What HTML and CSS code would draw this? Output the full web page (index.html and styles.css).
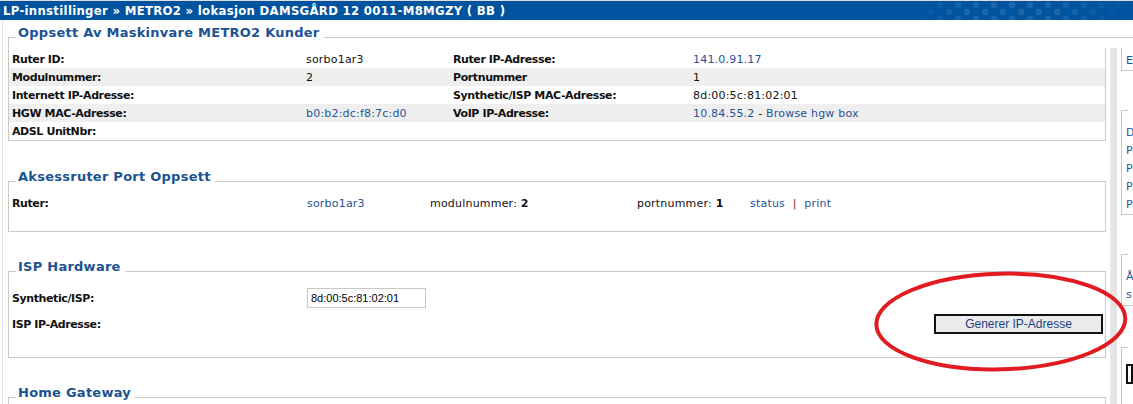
FILE: index.html
```html
<!DOCTYPE html>
<html lang="no">
<head>
<meta charset="utf-8">
<title>LP-innstillinger</title>
<link rel="stylesheet" href="styles.css">
</head>
<body>
<header class="topbar">
  <h1 class="crumbs">LP-innstillinger » METRO2 » lokasjon DAMSGÅRD 12 0011-M8MGZY ( BB )</h1>
  <div class="topbar-deco"></div>
</header>
<div class="layout">
  <main class="content">
    <section class="panel">
      <div class="panel-head"><span class="seg-start"></span><h2 class="legend">Oppsett Av Maskinvare METRO2 Kunder</h2><span class="seg-end"></span></div>
      <div class="panel-body hw-body">
        <div class="hw-table">
          <div class="row hw-row"><span class="lbl">Ruter ID:</span><span>sorbo1ar3</span><span class="lbl">Ruter IP-Adresse:</span><span><a href="#">141.0.91.17</a></span></div>
          <div class="row hw-row alt"><span class="lbl">Modulnummer:</span><span>2</span><span class="lbl">Portnummer</span><span>1</span></div>
          <div class="row hw-row"><span class="lbl">Internett IP-Adresse:</span><span></span><span class="lbl">Synthetic/ISP MAC-Adresse:</span><span>8d:00:5c:81:02:01</span></div>
          <div class="row hw-row alt"><span class="lbl">HGW MAC-Adresse:</span><span><a href="#">b0:b2:dc:f8:7c:d0</a></span><span class="lbl">VoIP IP-Adresse:</span><span><a href="#">10.84.55.2</a> - <a href="#">Browse hgw box</a></span></div>
          <div class="row hw-row"><span class="lbl">ADSL UnitNbr:</span><span></span><span></span><span></span></div>
        </div>
      </div>
    </section>

    <section class="panel panel-port">
      <div class="panel-head"><span class="seg-start"></span><h2 class="legend">Aksessruter Port Oppsett</h2><span class="seg-end"></span></div>
      <div class="panel-body port-body">
        <div class="row port-row">
          <span class="lbl">Ruter:</span>
          <span><a href="#">sorbo1ar3</a></span>
          <span>modulnummer: <b>2</b></span>
          <span>portnummer: <b>1</b></span>
          <span><a href="#">status</a> <span class="sep">|</span> <a href="#">print</a></span>
        </div>
      </div>
    </section>

    <section class="panel panel-isp">
      <div class="panel-head"><span class="seg-start"></span><h2 class="legend">ISP Hardware</h2><span class="seg-end"></span></div>
      <div class="panel-body isp-body">
        <div class="row isp-row"><span class="lbl">Synthetic/ISP:</span><input class="mac-input" type="text" value="8d:00:5c:81:02:01"></div>
        <div class="row isp-row"><span class="lbl">ISP IP-Adresse:</span><button class="gen-btn" type="button">Generer IP-Adresse</button></div>
        <svg class="mark" width="260" height="106" viewBox="0 0 260 106" aria-hidden="true">
          <ellipse cx="129.8" cy="52.5" rx="124.5" ry="47.8" transform="rotate(-1.5 129.8 52.5)" fill="none" stroke="#e21b23" stroke-width="4"/>
        </svg>
      </div>
    </section>

    <section class="panel panel-hgw">
      <div class="panel-head"><span class="seg-start"></span><h2 class="legend">Home Gateway</h2><span class="seg-end"></span></div>
      <div class="panel-body hgw-body"></div>
    </section>
  </main>

  <aside class="rightcol">
    <div class="rc-head"></div>
    <div class="rc-body">
      <div class="strip"></div>
      <div class="side">
        <div class="sbox sbox-a"><a href="#">E</a></div>
        <div class="sbox sbox-b">
          <span class="sbox-seg"></span>
          <ul class="slinks">
            <li><a href="#">D</a></li>
            <li><a href="#">P</a></li>
            <li><a href="#">P</a></li>
            <li><a href="#">P</a></li>
            <li><a href="#">P</a></li>
          </ul>
        </div>
        <div class="sbox sbox-c">
          <span class="sbox-seg"></span>
          <ul class="slinks">
            <li><a href="#">Å</a></li>
            <li><a href="#">s</a></li>
          </ul>
        </div>
        <div class="sbox sbox-d">
          <span class="sbox-seg"></span>
          <div class="sfield"></div>
        </div>
      </div>
    </div>
  </aside>
</div>
</body>
</html>
```

FILE: styles.css
```css
* { box-sizing: border-box; }
html, body { margin: 0; padding: 0; }
body {
  width: 1133px;
  height: 404px;
  overflow: hidden;
  background: #fff;
  font-family: "DejaVu Sans", Verdana, sans-serif;
  font-size: 11px;
  letter-spacing: 0.2px;
  color: #111;
}
a { color: #1f5494; text-decoration: none; }

/* top bar */
.topbar {
  display: flex;
  height: 20px;
  border-top: 1px solid #dedede;
  background: #00539f;
}
.crumbs {
  margin: 0;
  padding-left: 3px;
  font: bold 13px/19px "DejaVu Sans Condensed", "DejaVu Sans", sans-serif;
  letter-spacing: 0.3px;
  color: #fff;
  white-space: nowrap;
}
.topbar-deco {
  margin-left: auto;
  width: 220px;
  background-image:
    radial-gradient(circle, rgba(255,255,255,.11) 3px, transparent 3.7px),
    radial-gradient(circle, rgba(255,255,255,.11) 3px, transparent 3.7px);
  background-size: 18px 14px, 18px 14px;
  background-position: 0 -3px, 9px 4px;
  -webkit-mask-image: linear-gradient(90deg, transparent 0, #000 25%, #000 65%, transparent 100%);
  mask-image: linear-gradient(90deg, transparent 0, #000 25%, #000 65%, transparent 100%);
}

/* layout */
.layout { display: flex; height: 384px; overflow: hidden; }
.content {
  flex-shrink: 0;
  width: 1104px;
  margin-left: 2px;
  border-left: 1px solid #e2e2e2;
  padding-left: 5px;
}

/* panels */
.panel { width: 1098px; }
.panel-head { display: flex; height: 18px; }
.seg-start { width: 8px; border-bottom: 1px solid #c9c9c9; }
.seg-end { flex: 1; border-bottom: 1px solid #c9c9c9; }
.legend {
  align-self: flex-end;
  margin: 0 0 -2px;
  padding: 0 4px 0 2px;
  font: bold 13px/14px "DejaVu Sans", Verdana, sans-serif;
  letter-spacing: 0.25px;
  color: #1c5392;
  white-space: nowrap;
}
.panel-body { position: relative; border: 1px solid #c9c9c9; border-top: 0; }

.row { display: grid; align-items: center; padding-left: 3px; }
.lbl { font-weight: bold; color: #111; letter-spacing: -0.4px; }
b { letter-spacing: 0; }

/* hardware panel */
.hw-body { border-right: 0; padding-top: 10px; }
.hw-table { border-right: 1px solid #c9c9c9; padding-top: 2px; }
.hw-row { grid-template-columns: 294px 147px 240px 1fr; height: 18px; }
.hw-row.alt { background: #efefef; }

/* port panel */
.panel-port { margin-top: 23px; }
.port-body { padding: 12px 0 19px; }
.port-row { grid-template-columns: 295px 123px 207px 113px 1fr; height: 18px; }
.sep { color: #8b1c1c; padding: 0 4px; }

/* isp panel */
.panel-isp { margin-top: 22px; }
.isp-body { padding: 15px 0 22px; display: flex; flex-direction: column; gap: 4px; }
.isp-row { grid-template-columns: 295px 1fr; height: 22px; }
.mac-input {
  width: 119px;
  height: 20px;
  margin: 0;
  padding: 0 0 0 3px;
  border: 1px solid #c8c8c8;
  font: 11px "Liberation Sans", Arial, sans-serif;
  letter-spacing: 0;
  color: #000;
  background: #fff;
}
.gen-btn {
  justify-self: end;
  margin: 0 2px 0 0;
  width: 169px;
  height: 20px;
  padding: 0;
  border: 2px solid #111;
  background: #ebebeb;
  font: 12px "Liberation Sans", Arial, sans-serif;
  letter-spacing: 0;
  color: #1a3f80;
}
.mark { position: absolute; left: 862px; top: -3px; }

/* home gateway */
.panel-hgw { margin-top: 22px; }
.hgw-body { height: 40px; }

/* right column */
.rightcol { flex: 1; min-width: 0; display: flex; flex-direction: column; }
.rc-head { flex-shrink: 0; height: 18px; border-bottom: 1px solid #c9c9c9; }
.rc-body { display: flex; flex: 1; min-height: 0; margin-top: 10px; overflow: hidden; }
.strip { flex-shrink: 0; width: 7px; margin-left: 4px; background: #e4e4e4; border-left: 1px solid #eeeeee; }
.side { margin-left: 4px; flex: 1; min-width: 0; }
.sbox { border-left: 1px solid #c9c9c9; border-bottom: 1px solid #c9c9c9; padding-left: 4px; }
.sbox-a { height: 23px; padding-top: 6px; line-height: 14px; }
.sbox-seg { display: block; width: 6px; margin-left: -4px; border-top: 1px solid #c9c9c9; }
.slinks { list-style: none; margin: 0; padding: 13px 0 0; }
.slinks li { height: 18px; line-height: 18px; }
.sbox-b { margin-top: 39px; }
.sbox-c { margin-top: 39px; padding-bottom: 1px; }
.sbox-d { margin-top: 41px; height: 60px; border-bottom: 0; }
.sfield { height: 20px; margin-top: 16px; border: 2px solid #111; }
```
